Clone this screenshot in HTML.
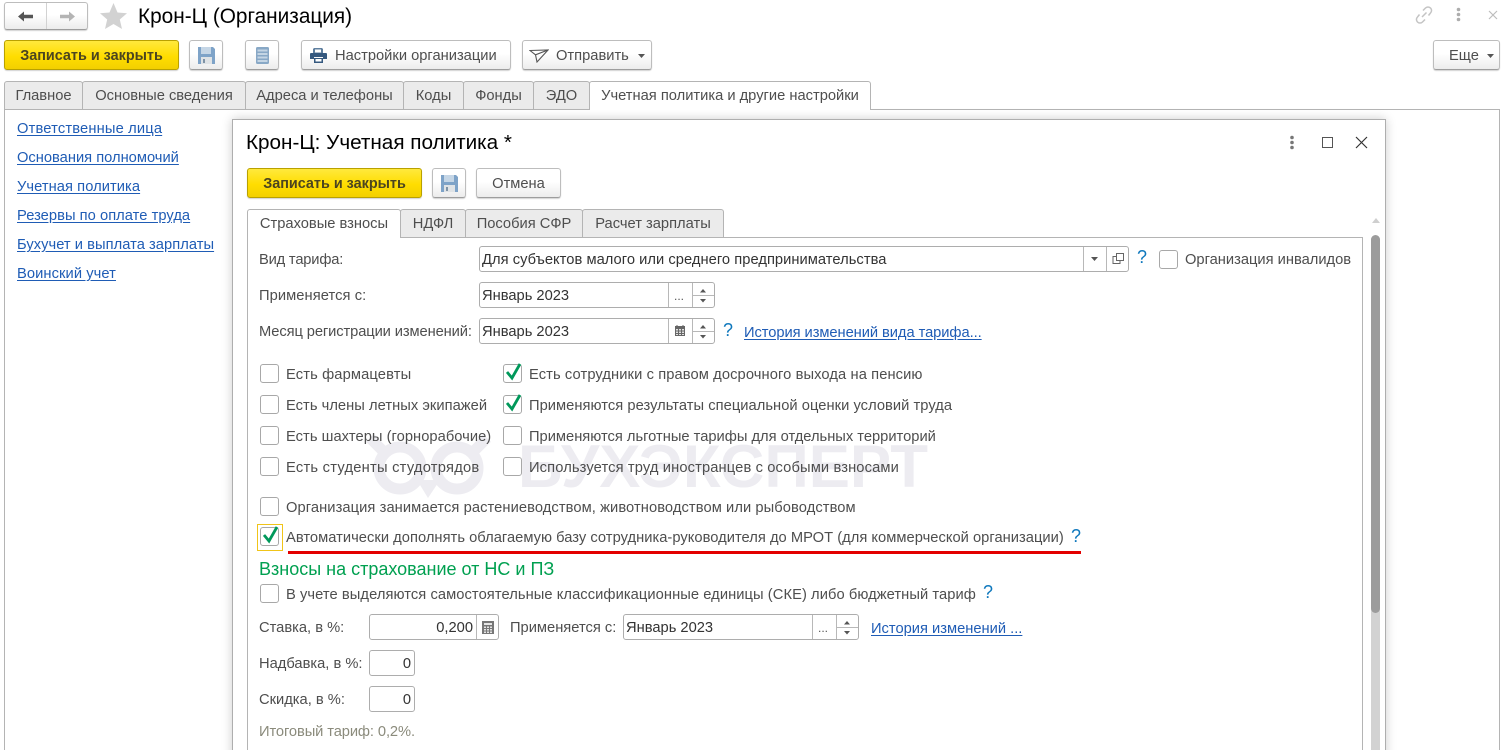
<!DOCTYPE html>
<html lang="ru"><head><meta charset="utf-8"><title>Крон-Ц</title>
<style>
html,body{margin:0;padding:0;width:1503px;height:750px;overflow:hidden;background:#fff}
body{position:relative;font-family:"Liberation Sans",Arial,sans-serif;font-size:14.7px;color:#4e4e4e}
.t{position:absolute;white-space:nowrap;line-height:18px;height:18px}
.b{position:absolute;box-sizing:border-box;height:30px;border:1px solid #bdbdbd;border-bottom-color:#9d9d9d;border-radius:3px;background:linear-gradient(#fff,#fff 45%,#ececec);box-shadow:0 1px 1px rgba(0,0,0,.18);line-height:30px;text-align:center;white-space:nowrap}
.y{border:1px solid #b9a100;background:linear-gradient(#ffe93d,#ffdd00 55%,#f3d000);font-weight:bold;font-size:14.4px;color:#4b4520}
.tab{position:absolute;box-sizing:border-box;background:#ebebeb;border:1px solid #b4b4b4;border-bottom:0;border-radius:3px 3px 0 0;text-align:center;white-space:nowrap;line-height:29px}
.a{background:#fff;z-index:3}
.f{position:absolute;box-sizing:border-box;background:#fff;border:1px solid #adadad;border-radius:3px;height:26px}
.d{position:absolute;top:0;bottom:0;width:1px;background:#b8b8b8}
.v{position:absolute;left:2px;top:4px;line-height:18px;color:#333;white-space:nowrap}
.c{position:absolute;box-sizing:border-box;width:19px;height:19px;background:#fff;border:1px solid #a8a8a8;border-radius:3px}
.c svg{position:absolute;left:1px;top:-4px}
.l{color:#1f5cb5;text-decoration:underline;text-underline-offset:2px}
.t.q{color:#0f78bd;font-size:18px;line-height:16px;height:16px}
.s{position:absolute}
</style></head><body>

<!-- header -->
<div class="b" style="left:4px;top:2px;width:84px;height:28px">
 <div class="d" style="left:41px;background:#d2d2d2"></div>
 <svg class="s" style="left:12px;top:7px" width="62" height="13" viewBox="0 0 62 13"><path d="M1 6.500 7 1.500V4.800H16V8.200H7V11.500Z" fill="#555"/><path d="M58 6.500 52 1.500V4.800H43V8.200H52V11.500Z" fill="#b4b4b4"/></svg>
</div>
<svg class="s" style="left:99px;top:2px" width="29" height="28" viewBox="0 0 29 28"><path d="M14.500 1 18.500 10.500 28 11.200 20.800 17.500 23 27 14.500 22 6 27 8.200 17.500 1 11.200 10.500 10.500Z" fill="#d2d2d2"/></svg>
<div class="t" style="left:138px;top:5px;font-size:20.8px;line-height:24px;height:24px;color:#000">Крон-Ц (Организация)</div>

<svg class="s" style="left:1414px;top:5px" width="20" height="20" viewBox="0 0 20 20" fill="none" stroke="#c4c4c4" stroke-width="1.500"><path d="M8 12 12.500 7.500"/><path d="M9 5.500 11.500 3a3.500 3.500 0 0 1 5 5L14.500 10.500"/><path d="M11 14.500 8.500 17a3.500 3.500 0 0 1-5-5L5.500 9.500"/></svg>
<svg class="s" style="left:1455px;top:7px" width="8" height="16"><circle cx="3.500" cy="2.500" r="1.800" fill="#adadad"/><circle cx="3.500" cy="7.500" r="1.800" fill="#adadad"/><circle cx="3.500" cy="12.500" r="1.800" fill="#adadad"/></svg>
<svg class="s" style="left:1487px;top:9px" width="12" height="12" fill="none" stroke="#bdbdbd" stroke-width="1.200"><path d="M2 2 10 10M10 2 2 10"/></svg>

<!-- toolbar -->
<div class="b y" style="left:4px;top:40px;width:175px">Записать и закрыть</div>
<div class="b" style="left:189px;top:40px;width:34px">
 <svg class="s" style="left:8px;top:6px" width="17" height="17" viewBox="0 0 17 17"><path d="M0 0H15L17 2V17H0Z" fill="#7ea3c8"/><path d="M3 0H13V7H3Z" fill="#c5d6e6"/><path d="M3 10H14V17H3Z" fill="#dfe3e6"/><path d="M5 12H7V16H5Z" fill="#7f93a6"/></svg>
</div>
<div class="b" style="left:245px;top:40px;width:34px">
 <svg class="s" style="left:10px;top:6px" width="13" height="17" viewBox="0 0 13 17"><rect x="0" y="0" width="13" height="17" rx="1.500" fill="#88a8c6"/><path d="M1.500 2.500H11.500V4.500H1.500ZM1.500 6H11.500V8H1.500ZM1.500 9.500H11.500V11.500H1.500ZM1.500 13H11.500V15H1.500Z" fill="#c4d5e4"/></svg>
</div>
<div class="b" style="left:301px;top:40px;width:210px;text-align:left;padding-left:33px">Настройки организации
 <svg class="s" style="left:8px;top:7px" width="17" height="15" viewBox="0 0 17 15"><path d="M4 0H12L13 1V5H3V1Z" fill="#5f7f9f"/><path d="M5 1.500H11V4.500H5Z" fill="#fff"/><path d="M1 5H16Q17 5 17 6V11H13V9H4V11H0V6Q0 5 1 5Z" fill="#35597f"/><path d="M4 10H13V15H4Z" fill="#35597f"/><path d="M5.500 11H11.500V13.500H5.500Z" fill="#fff"/></svg>
</div>
<div class="b" style="left:522px;top:40px;width:130px;text-align:left;padding-left:33px">Отправить
 <svg class="s" style="left:6px;top:8px" width="20" height="14" viewBox="0 0 20 14" fill="none" stroke="#555" stroke-width="1.100"><path d="M1 1.500 19 1 8 13 6.500 5.800Z"/><path d="M6.500 5.800 19 1"/></svg>
 <svg class="s" style="left:115px;top:13px" width="7" height="4"><path d="M0 0H7L3.500 4Z" fill="#555"/></svg>
</div>
<div class="b" style="left:1433px;top:40px;width:67px;text-align:left;padding-left:15px">Еще
 <svg class="s" style="left:53px;top:13px" width="7" height="4"><path d="M0 0H7L3.500 4Z" fill="#555"/></svg>
</div>

<!-- main tabs -->
<div class="s" style="left:4px;top:109px;width:1496px;height:660px;box-sizing:border-box;border:1px solid #b4b4b4;background:#fff"></div>
<div class="tab" style="left:4px;top:81px;width:79px;height:28px">Главное</div>
<div class="tab" style="left:82px;top:81px;width:164px;height:28px">Основные сведения</div>
<div class="tab" style="left:245px;top:81px;width:159px;height:28px">Адреса и телефоны</div>
<div class="tab" style="left:403px;top:81px;width:61px;height:28px">Коды</div>
<div class="tab" style="left:463px;top:81px;width:71px;height:28px">Фонды</div>
<div class="tab" style="left:533px;top:81px;width:57px;height:28px">ЭДО</div>
<div class="tab a" style="left:589px;top:81px;width:282px;height:29px">Учетная политика и другие настройки</div>

<!-- left links -->
<div class="t l" style="left:17px;top:120px;letter-spacing:.16px">Ответственные лица</div>
<div class="t l" style="left:17px;top:149px">Основания полномочий</div>
<div class="t l" style="left:17px;top:178px;letter-spacing:.06px">Учетная политика</div>
<div class="t l" style="left:17px;top:207px;letter-spacing:.04px">Резервы по оплате труда</div>
<div class="t l" style="left:17px;top:236px;letter-spacing:.04px">Бухучет и выплата зарплаты</div>
<div class="t l" style="left:17px;top:265px;letter-spacing:.08px">Воинский учет</div>

<!-- modal -->
<div class="s" style="left:232px;top:119px;width:1154px;height:660px;box-sizing:border-box;border:1px solid #aeaeae;background:#fff;box-shadow:0 0 10px rgba(0,0,0,.2)"></div>
<div class="t" style="left:246px;top:131px;font-size:20.7px;line-height:24px;height:24px;color:#000">Крон-Ц: Учетная политика *</div>
<svg class="s" style="left:1288px;top:135px" width="8" height="16"><circle cx="4" cy="2.500" r="1.800" fill="#777"/><circle cx="4" cy="7.500" r="1.800" fill="#777"/><circle cx="4" cy="12.500" r="1.800" fill="#777"/></svg>
<div class="s" style="left:1322px;top:137px;width:11px;height:11px;box-sizing:border-box;border:1.500px solid #555"></div>
<svg class="s" style="left:1355px;top:136px" width="13" height="13" fill="none" stroke="#333" stroke-width="1.200"><path d="M1 1 12 12M12 1 1 12"/></svg>

<div class="b y" style="left:247px;top:168px;width:175px">Записать и закрыть</div>
<div class="b" style="left:432px;top:168px;width:34px">
 <svg class="s" style="left:8px;top:6px" width="17" height="17" viewBox="0 0 17 17"><path d="M0 0H15L17 2V17H0Z" fill="#7ea3c8"/><path d="M3 0H13V7H3Z" fill="#c5d6e6"/><path d="M3 10H14V17H3Z" fill="#dfe3e6"/><path d="M5 12H7V16H5Z" fill="#7f93a6"/></svg>
</div>
<div class="b" style="left:476px;top:168px;width:85px">Отмена</div>

<!-- inner tabs -->
<div class="s" style="left:247px;top:237px;width:1116px;height:540px;box-sizing:border-box;border:1px solid #b4b4b4;background:#fff"></div>
<div class="tab a" style="left:247px;top:209px;width:154px;height:29px">Страховые взносы</div>
<div class="tab" style="left:400px;top:209px;width:66px;height:28px">НДФЛ</div>
<div class="tab" style="left:465px;top:209px;width:118px;height:28px">Пособия СФР</div>
<div class="tab" style="left:582px;top:209px;width:142px;height:28px">Расчет зарплаты</div>

<!-- scrollbar -->
<svg class="s" style="left:1372px;top:218px" width="8" height="5"><path d="M0 5H8L4 0Z" fill="#cfcfcf"/></svg>
<div class="s" style="left:1371px;top:609px;width:9px;height:141px;background:#d2d2d2"></div>
<div class="s" style="left:1371px;top:235px;width:9px;height:378px;background:#9c9c9c;border-radius:5px"></div>

<!-- watermark -->
<svg class="s" style="left:360px;top:429px" width="580" height="75" viewBox="0 0 580 75">
 <g fill="none" stroke="#edecf1" stroke-width="11">
  <circle cx="40" cy="39" r="21"/><circle cx="97" cy="39" r="21"/>
  <path d="M10 9 24 23M127 9 113 23"/>
 </g>
 <path d="M57 51H80L68 69Z" fill="#edecf1"/>
 <text x="158" y="58" font-family="Liberation Sans" font-weight="bold" font-size="60" textLength="410" lengthAdjust="spacingAndGlyphs" fill="#edecf1">БУХЭКСПЕРТ</text>
</svg>

<!-- form row 1 -->
<div class="t" style="left:259px;top:251px;letter-spacing:-.18px">Вид тарифа:</div>
<div class="f" style="left:479px;top:246px;width:650px">
 <div class="v" style="letter-spacing:.04px">Для субъектов малого или среднего предпринимательства</div>
 <div class="d" style="left:603px"></div><div class="d" style="left:626px"></div>
 <svg class="s" style="left:611px;top:10px" width="7" height="4"><path d="M0 0H7L3.500 4Z" fill="#555"/></svg>
 <svg class="s" style="left:632px;top:5px" width="12" height="13" fill="none" stroke="#666"><rect x="4.500" y="1.500" width="7" height="7" fill="#fff"/><path d="M4.500 4.500H1V11.500H8V8.500"/></svg>
</div>
<div class="t q" style="left:1137px;top:249px">?</div>
<div class="c" style="left:1159px;top:250px"></div>
<div class="t" style="left:1185px;top:251px">Организация инвалидов</div>

<!-- row 2 -->
<div class="t" style="left:259px;top:287px;letter-spacing:.07px">Применяется с:</div>
<div class="f" style="left:479px;top:282px;width:236px">
 <div class="v">Январь 2023</div>
 <div class="d" style="left:188px"></div><div class="d" style="left:212px"></div>
 <div class="s" style="left:213px;top:12px;width:21px;height:1px;background:#b8b8b8"></div>
 <div class="s" style="left:194px;top:5px;font-size:12px;line-height:16px;color:#555">...</div>
 <svg class="s" style="left:220px;top:6px" width="6" height="4"><path d="M0 3.500H6L3 0Z" fill="#555"/></svg>
 <svg class="s" style="left:220px;top:16px" width="6" height="4"><path d="M0 0H6L3 3.500Z" fill="#555"/></svg>
</div>

<!-- row 3 -->
<div class="t" style="left:259px;top:323px;letter-spacing:-.1px">Месяц регистрации изменений:</div>
<div class="f" style="left:479px;top:318px;width:236px">
 <div class="v">Январь 2023</div>
 <div class="d" style="left:188px"></div><div class="d" style="left:212px"></div>
 <div class="s" style="left:213px;top:12px;width:21px;height:1px;background:#b8b8b8"></div>
 <svg class="s" style="left:194px;top:6px" width="12" height="12" viewBox="0 0 12 12"><path d="M1 1H11V11H1Z" fill="#666"/><path d="M2.500 0H3.500V2H2.500ZM8.500 0H9.500V2H8.500Z" fill="#666"/><path d="M2 4H4V5.500H2ZM5 4H7V5.500H5ZM8 4H10V5.500H8ZM2 6.500H4V8H2ZM5 6.500H7V8H5ZM8 6.500H10V8H8ZM2 9H4V10H2ZM5 9H7V10H5ZM8 9H10V10H8Z" fill="#e0e0e0"/></svg>
 <svg class="s" style="left:220px;top:6px" width="6" height="4"><path d="M0 3.500H6L3 0Z" fill="#555"/></svg>
 <svg class="s" style="left:220px;top:16px" width="6" height="4"><path d="M0 0H6L3 3.500Z" fill="#555"/></svg>
</div>
<div class="t q" style="left:723px;top:322px">?</div>
<div class="t l" style="left:744px;top:324px;letter-spacing:-.06px">История изменений вида тарифа...</div>

<!-- checks -->
<div class="c" style="left:260px;top:364px"></div><div class="t" style="left:286px;top:366px;letter-spacing:.13px">Есть фармацевты</div>
<div class="c" style="left:260px;top:395px"></div><div class="t" style="left:286px;top:397px;letter-spacing:.04px">Есть члены летных экипажей</div>
<div class="c" style="left:260px;top:426px"></div><div class="t" style="left:286px;top:428px;letter-spacing:.04px">Есть шахтеры (горнорабочие)</div>
<div class="c" style="left:260px;top:457px"></div><div class="t" style="left:286px;top:459px;letter-spacing:.24px">Есть студенты студотрядов</div>

<div class="c" style="left:503px;top:364px"><svg width="17" height="21" viewBox="0 0 17 21"><path d="M2 11 7 17 15 3" fill="none" stroke="#00985a" stroke-width="2.800"/></svg></div>
<div class="t" style="left:529px;top:366px;letter-spacing:.1px">Есть сотрудники с правом досрочного выхода на пенсию</div>
<div class="c" style="left:503px;top:395px"><svg width="17" height="21" viewBox="0 0 17 21"><path d="M2 11 7 17 15 3" fill="none" stroke="#00985a" stroke-width="2.800"/></svg></div>
<div class="t" style="left:529px;top:397px;letter-spacing:.04px">Применяются результаты специальной оценки условий труда</div>
<div class="c" style="left:503px;top:426px"></div><div class="t" style="left:529px;top:428px">Применяются льготные тарифы для отдельных территорий</div>
<div class="c" style="left:503px;top:457px"></div><div class="t" style="left:529px;top:459px;letter-spacing:.125px">Используется труд иностранцев с особыми взносами</div>

<div class="c" style="left:260px;top:497px"></div><div class="t" style="left:286px;top:499px;letter-spacing:.08px">Организация занимается растениеводством, животноводством или рыбоводством</div>

<div class="s" style="left:257px;top:524px;width:26px;height:27px;box-sizing:border-box;border:1px solid #f0c419"></div>
<div class="c" style="left:260px;top:527px"><svg width="17" height="21" viewBox="0 0 17 21"><path d="M2 11 7 17 15 3" fill="none" stroke="#00985a" stroke-width="2.800"/></svg></div>
<div class="t" style="left:286px;top:529px;letter-spacing:.03px">Автоматически дополнять облагаемую базу сотрудника-руководителя до МРОТ (для коммерческой организации)</div>
<div class="t q" style="left:1071px;top:528px">?</div>
<div class="s" style="left:288px;top:551px;width:793px;height:3px;background:#e30000"></div>

<div class="t" style="left:259px;top:559px;font-size:18px;line-height:20px;height:20px;color:#00a050">Взносы на страхование от НС и ПЗ</div>
<div class="c" style="left:260px;top:584px"></div>
<div class="t" style="left:286px;top:586px;letter-spacing:.07px">В учете выделяются самостоятельные классификационные единицы (СКЕ) либо бюджетный тариф</div>
<div class="t q" style="left:983px;top:584px">?</div>

<div class="t" style="left:259px;top:619px">Ставка, в %:</div>
<div class="f" style="left:369px;top:614px;width:130px">
 <div class="v" style="left:auto;right:25px">0,200</div>
 <div class="d" style="left:106px"></div>
 <svg class="s" style="left:112px;top:6px" width="12" height="13" viewBox="0 0 12 13"><path d="M0 0H12V13H0Z" fill="#777"/><path d="M2 2H10V4H2Z" fill="#e6e6e6"/><path d="M2 5.500H4V7H2ZM5 5.500H7V7H5ZM8 5.500H10V7H8ZM2 8H4V9.500H2ZM5 8H7V9.500H5ZM8 8H10V9.500H8ZM2 10.500H4V12H2ZM5 10.500H7V12H5ZM8 10.500H10V12H8Z" fill="#e6e6e6"/></svg>
</div>
<div class="t" style="left:510px;top:619px">Применяется с:</div>
<div class="f" style="left:623px;top:614px;width:236px">
 <div class="v">Январь 2023</div>
 <div class="d" style="left:188px"></div><div class="d" style="left:212px"></div>
 <div class="s" style="left:213px;top:12px;width:21px;height:1px;background:#b8b8b8"></div>
 <div class="s" style="left:194px;top:5px;font-size:12px;line-height:16px;color:#555">...</div>
 <svg class="s" style="left:220px;top:6px" width="6" height="4"><path d="M0 3.500H6L3 0Z" fill="#555"/></svg>
 <svg class="s" style="left:220px;top:16px" width="6" height="4"><path d="M0 0H6L3 3.500Z" fill="#555"/></svg>
</div>
<div class="t l" style="left:871px;top:620px">История изменений ...</div>

<div class="t" style="left:259px;top:655px">Надбавка, в %:</div>
<div class="f" style="left:369px;top:650px;width:46px"><div class="v" style="left:auto;right:3px">0</div></div>
<div class="t" style="left:259px;top:691px">Скидка, в %:</div>
<div class="f" style="left:369px;top:686px;width:46px"><div class="v" style="left:auto;right:3px">0</div></div>
<div class="t" style="left:259px;top:723px;color:#8b8b7c;letter-spacing:-.1px">Итоговый тариф: 0,2%.</div>

</body></html>
